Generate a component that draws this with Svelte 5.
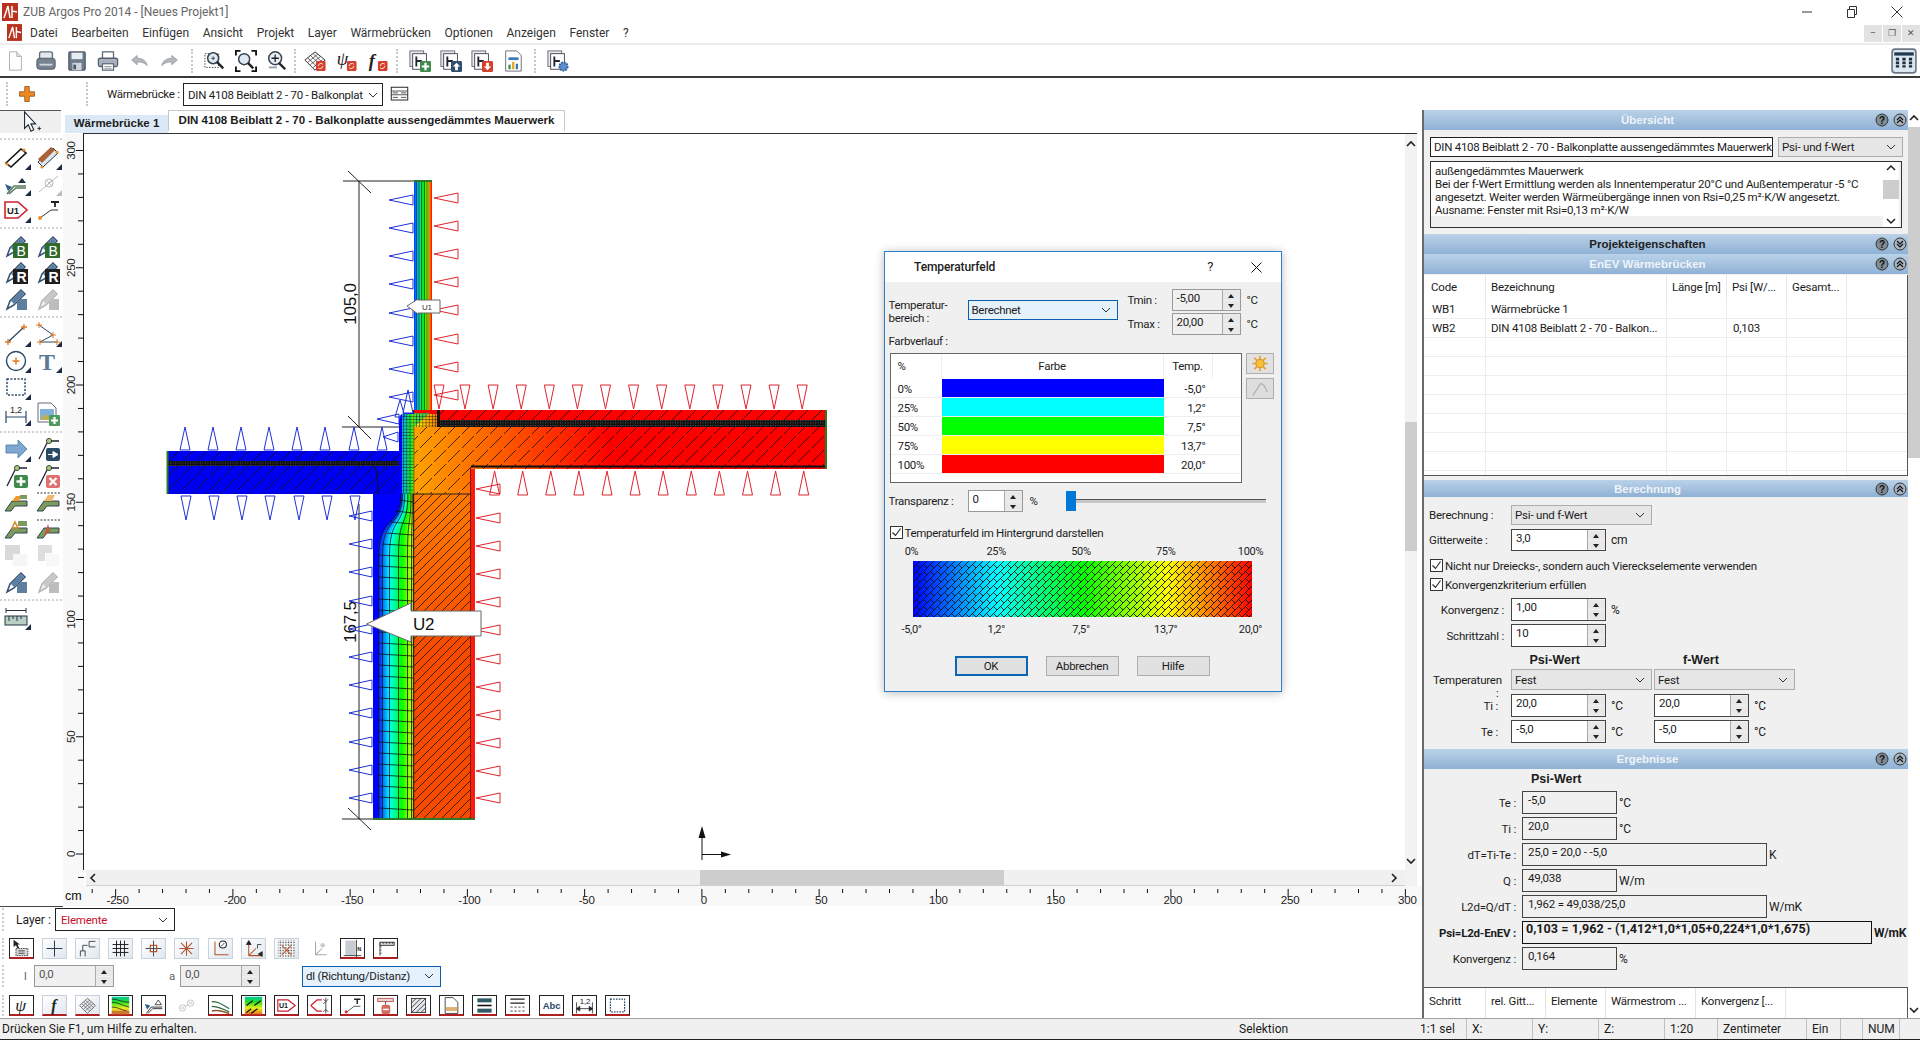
<script>
const badge = `<rect x="13" y="12" width="10.5" height="11" rx="1.5" fill="#d5402d"/><path d="M15.5 17.5a3 3 0 0 1 5-2M20.5 17.5a3 3 0 0 1-5 2" stroke="#fff" fill="none"/>`;
const stack = `<rect x="1" y="1" width="15" height="17" fill="#e8e8e8" stroke="#667"/><rect x="4" y="4" width="15" height="17" fill="#fff" stroke="#445"/><path d="M8 7v11M8 12h6" stroke="#223" stroke-width="2"/>`;
const pen = `<path d="M3 22l3-8L17 3l4 4L10 18z" fill="#fff" stroke="#33506e" stroke-width="1.5"/><path d="M7 14l10-10 3 3-10 10z" fill="#5b7fa3"/>`;
const penG = `<path d="M3 22l3-8L17 3l4 4L10 18z" fill="#eee" stroke="#b5b5b5" stroke-width="1.5"/><path d="M7 14l10-10 3 3-10 10z" fill="#c8c8c8"/>`;
const node = `<circle cx="13" cy="4" r="2.6" fill="#a9c48a" stroke="#3c5a2d"/><path d="M3 22L11 6M15 4h8" stroke="#223" stroke-width="1.3" fill="none"/>`;
const strip = `<path d="M1 21l7-10h15v5H11l-4 5z" fill="#7c9a5e" stroke="#345"/>`;
const I = {
  doc:`<path d="M6 2h8l5 5v15H6z" fill="#fff" stroke="#a5adb8"/><path d="M14 2v5h5" fill="#dfe4ea" stroke="#a5adb8"/>`,
  fax:`<rect x="5" y="2" width="14" height="9" rx="2" fill="#e5e9ee" stroke="#5d6b7b" stroke-width="1.5"/><rect x="2" y="9" width="20" height="12" rx="3" fill="#76828f" stroke="#4c5763"/><rect x="5" y="15" width="14" height="2" fill="#cfd5db"/>`,
  save:`<rect x="3" y="2" width="18" height="20" rx="1" fill="#6c7a8a" stroke="#3d4854"/><rect x="6" y="3" width="12" height="7" fill="#e8edf2"/><rect x="7" y="14" width="10" height="8" fill="#cfd6dd"/><rect x="8" y="16" width="3" height="5" fill="#4d5966"/>`,
  print:`<rect x="6" y="2" width="12" height="8" fill="#fff" stroke="#5d6b7b" stroke-width="1.4"/><rect x="1.5" y="9" width="21" height="9" rx="2" fill="#a9b2bc" stroke="#56616d" stroke-width="1.4"/><rect x="6" y="15" width="12" height="7" fill="#fff" stroke="#5d6b7b" stroke-width="1.4"/><path d="M8 18h8M8 20h8" stroke="#89939e"/>`,
  undo:`<path d="M4 11l6-5v3c6 0 10 3 11 8-3-3-6-4-11-4v3z" fill="#b4b8bc" stroke="#a0a4a8"/>`,
  redo:`<path d="M20 11l-6-5v3C8 9 4 12 3 17c3-3 6-4 11-4v3z" fill="#b4b8bc" stroke="#a0a4a8"/>`,
  zoomA:`<rect x="1" y="4" width="15" height="15" fill="none" stroke="#333" stroke-dasharray="1.5 1.5"/><circle cx="10" cy="9" r="6" fill="#dfe9f2" stroke="#34404c" stroke-width="1.6"/><path d="M14 13l7 7" stroke="#222" stroke-width="2.6"/><path d="M8 9h4M10 7v4" stroke="#34404c"/>`,
  zoomB:`<path d="M1 6V1h5M18 1h5v5M23 18v5h-5M6 23H1v-5" fill="none" stroke="#111" stroke-width="2"/><circle cx="10" cy="10" r="6" fill="#dfe9f2" stroke="#34404c" stroke-width="1.6"/><path d="M14 14l6 6" stroke="#222" stroke-width="2.6"/>`,
  zoomC:`<circle cx="10" cy="9" r="7" fill="#e8eef4" stroke="#34404c" stroke-width="1.6"/><path d="M6 9h8M10 5v8" stroke="#222" stroke-width="1.4"/><path d="M14 14l7 7" stroke="#222" stroke-width="2.6"/><path d="M3 19h9" stroke="#8ea2b5" stroke-width="2"/>`,
  gridR:`<path d="M1 11L12 2l11 9-11 11z" fill="#fff" stroke="#222"/><path d="M4 8.500l11 10.500M7 6l11 10M10 4l10 9.500M4 13.500L15 4.500M7 16l11-9M10 19l10-8" stroke="#333" stroke-width=".8"/>`+badge,
  psiR:`<text x="2" y="16" font-family="Liberation Serif" font-style="italic" font-size="20" fill="#222">ψ</text>`+badge,
  fR:`<text x="3" y="18" font-family="Liberation Serif" font-style="italic" font-weight="bold" font-size="20" fill="#222">f</text>`+badge,
  stackP:stack+`<rect x="12" y="12" width="12" height="12" rx="1.5" fill="#3f8a4d"/><path d="M18 14v8M14 18h8" stroke="#fff" stroke-width="2.4"/>`,
  stackU:stack+`<rect x="12" y="12" width="12" height="12" rx="1.5" fill="#2e4f6e"/><path d="M18 14l-4 4h2.500v4h3v-4H22z" fill="#fff"/>`,
  stackD:stack+`<rect x="12" y="12" width="12" height="12" rx="1.5" fill="#d5402d"/><path d="M18 22l-4-4h2.500v-4h3v4H22z" fill="#fff"/>`,
  stackG:stack+`<circle cx="18" cy="18" r="4.500" fill="#5b8fcf" stroke="#2d5f9c" stroke-width="2" stroke-dasharray="2 1"/>`,
  chart:`<path d="M4 1h12l5 5v17H4z" fill="#fff" stroke="#667"/><rect x="7" y="8" width="11" height="3" fill="#3b78b5"/><rect x="7" y="16" width="2.500" height="5" fill="#3d8a4a"/><rect x="11" y="13" width="2.500" height="8" fill="#e5a520"/><rect x="15" y="15" width="2.500" height="6" fill="#3b78b5"/>`,
  panel:`<rect x="1" y="1" width="22" height="22" rx="3" fill="#dbe7f3" stroke="#6d7680" stroke-width="1.5"/><rect x="3" y="4" width="18" height="3" fill="#243a50"/><path d="M6 9v9M12 9v9M18 9v9" stroke="#1f2d3a" stroke-width="3" stroke-dasharray="2.500 1"/>`,
  plus:`<path d="M9 2h6v7h7v6h-7v7H9v-7H2V9h7z" fill="#ee8a22" stroke="#8a4a12"/>`,
  list:`<rect x="1" y="3" width="22" height="17" fill="#fff" stroke="#222" stroke-width="1.3"/><path d="M1 8h22M1 13h22M3 16.500h7M14 16.500h7M3 10.500h7M14 10.500h7" stroke="#222"/>`,
  arrowTool:`<path d="M5 1v18l4-4 3 7 3-1.500-3-6.500h5z" fill="#fff" stroke="#1d2a38" stroke-width="1.2"/><path d="M19 19h4M21 17v4" stroke="#222"/>`,
  rectA:`<path d="M2 18L17 4l5 4L7 22z" fill="#fff" stroke="#111" stroke-width="1.6"/><circle cx="3" cy="19" r="1.600" fill="#e8902a"/><circle cx="20" cy="5" r="1.600" fill="#e8902a"/>`,
  rectB:`<path d="M2 17L17 3l5 5L7 22z" fill="#dfe8f0" stroke="#234" stroke-width="1"/><path d="M2 14L15 2l4 3L6 18z" fill="#a8623a"/><circle cx="6" cy="22" r="1.600" fill="#e8902a"/><circle cx="21" cy="7" r="1.600" fill="#e8902a"/>`,
  wallT:`<path d="M3 22l7-8h12M5 22l7-6h10" stroke="#5b7a5c" fill="none" stroke-width="1.500"/><path d="M14 11l4-5 4 5z" fill="#234"/><path d="M1 12l7 3-4 4z" fill="#2c5f94"/>`,
  circX:`<circle cx="13" cy="11" r="4" fill="none" stroke="#bbb"/><path d="M3 20L22 4M10 8l6 6M16 8l-6 6" stroke="#bbb"/>`,
  u1:`<path d="M1 4h13l9 8-9 8H1z" fill="#fff" stroke="#d02030" stroke-width="1.600"/><text x="3" y="15.500" font-size="9.500" font-weight="bold" font-family="Liberation Sans" fill="#222">U1</text>`,
  tLine:`<path d="M15 4h8M19 4v5" stroke="#222" stroke-width="1.800"/><path d="M4 20L15 12h7" stroke="#333" fill="none"/><circle cx="4" cy="20" r="2" fill="#e8902a"/>`,
  penB:pen+`<rect x="9" y="9" width="15" height="15" fill="#2f6b2a"/><text x="12.500" y="22" font-size="14" font-family="Liberation Sans" fill="#fff">B</text>`,
  penR:pen+`<rect x="9" y="9" width="15" height="15" fill="#1e1e1e"/><text x="12.500" y="22" font-size="14" font-weight="bold" font-family="Liberation Sans" fill="#fff">R</text>`,
  penS:pen+`<path d="M13 15l4-3h6v11H13z" fill="#5f7f9f"/>`,
  penD:penG+`<path d="M13 15l4-3h6v11H13z" fill="#bdbdbd"/>`,
  lineX:`<path d="M4 20L20 5" stroke="#2c4a68" stroke-width="1.300"/><path d="M1 20h6M4 17v6M17 5h6M20 2v6" stroke="#e07a22" stroke-width="1.300"/>`,
  poly:`<path d="M3 3l14 10-13 7h17" stroke="#2c4a68" fill="none"/><path d="M0 3h6M3 0v6M14 13h6M17 10v6M1 20h6M4 17v6M18 20h6M21 17v6" stroke="#e07a22"/>`,
  circ:`<circle cx="12" cy="12" r="9.500" fill="#fff" stroke="#2c4a68" stroke-width="1.400"/><path d="M8.500 12h7M12 8.500v7" stroke="#e07a22" stroke-width="1.400"/>`,
  bigT:`<text x="3" y="21" font-family="Liberation Serif" font-weight="bold" font-size="24" fill="#5b7a96">T</text>`,
  dash:`<rect x="3" y="4" width="18" height="16" fill="none" stroke="#2c4a68" stroke-width="1.500" stroke-dasharray="2 1.500"/>`,
  dim:`<path d="M2 9v12M22 9v12M2 15h20" stroke="#2c4a68" stroke-width="1.200"/><text x="6" y="11" font-size="9" font-family="Liberation Sans" fill="#222">1,2</text>`,
  pic:`<path d="M2 1h13l5 5v14H2z" fill="#fff" stroke="#667"/><rect x="4" y="7" width="14" height="11" fill="#7fb2d8"/><path d="M4 18l5-6 9 6z" fill="#c2b050"/><rect x="13" y="13" width="11" height="11" rx="1" fill="#4f9a5d"/><path d="M18.500 15v7M15 18.500h7" stroke="#fff" stroke-width="2.200"/>`,
  blueArr:`<path d="M2 8h12V3l9 9-9 9v-5H2z" fill="#7ea8cf" stroke="#4a78a5" stroke-width=".8"/>`,
  nodeArr:node+`<rect x="10" y="11" width="14" height="13" rx="2" fill="#2a4a68"/><path d="M12 17.500h5v-3l5 3-5 3v-3" fill="#fff" stroke="#fff"/>`,
  nodeP:node+`<rect x="10" y="11" width="14" height="13" rx="2" fill="#3f8a4d"/><path d="M17 13v9M12.500 17.500h9" stroke="#fff" stroke-width="2.500"/>`,
  nodeX:node+`<rect x="10" y="11" width="14" height="13" rx="2" fill="#e07070"/><path d="M13.500 14l7 7M20.500 14l-7 7" stroke="#fff" stroke-width="2.200"/>`,
  stripA:strip+`<path d="M8 11l4-5h6l-3 5z" fill="#ef9a2a"/><path d="M16 5h7v4h-7z" fill="#7c9a5e"/>`,
  stripB:strip+`<path d="M8 11l4-6h7l-3 6z" fill="#f2b66e"/><path d="M1 3h23" stroke="#333" stroke-dasharray="2 1.500"/>`,
  stripC:strip+`<path d="M8 11l3-6 3 6z" fill="none" stroke="#d88a30" stroke-width="1.600"/><path d="M14 4h9v5h-9z" fill="#7c9a5e"/>`,
  stripD:strip+`<path d="M8 19l4-12 2 7z" fill="#c8563a"/><path d="M1 3h23" stroke="#333" stroke-dasharray="2 1.500"/>`,
  sqA:`<rect x="1" y="2" width="15" height="15" fill="#d9d9d9"/><rect x="9" y="11" width="14" height="12" fill="#f6f6f6"/>`,
  sqB:`<path d="M2 2h14v8h-7v8H2z" fill="#dedede"/><path d="M10 11h13v12H10z" fill="#f8f8f8"/>`,
  ruler:`<path d="M2 3v5M22 3v5M2 5.500h20" stroke="#234"/><rect x="1" y="11" width="22" height="9" fill="#b9cfc4" stroke="#234"/><path d="M5 11v5M9 11v3M13 11v5M17 11v3" stroke="#234"/>`,
  selBox:`<path d="M2 1v9l3-2 2 4 2-1-2-4h3z" fill="#222"/><rect x="5" y="12" width="15" height="9" fill="#d9d9d9" stroke="#222" stroke-dasharray="2 1"/><path d="M8 15h8M8 18h8" stroke="#222"/>`,
  cross:`<path d="M2 12h20M12 2v20" stroke="#2c3e50" stroke-width="1.300"/>`,
  bracket:`<path d="M3 22v-7h6v7M6 15V8h6" stroke="#223" fill="none"/><path d="M14 3h8M14 3v7h8" stroke="#223" fill="none"/>`,
  gridS:`<path d="M2 7h20M2 12h20M2 17h20M7 2v20M12 2v20M17 2v20" stroke="#1a1a1a" stroke-width="1.200"/>`,
  snap:`<path d="M2 12h20M12 2v20" stroke="#222"/><rect x="8" y="8" width="8" height="8" fill="none" stroke="#b04a20" stroke-width="1.400"/>`,
  star:`<path d="M3 12h18M12 3v18M5 5l14 14M19 5L5 19" stroke="#b4522a" stroke-width="1.300"/>`,
  axisO:`<path d="M5 3v17h17" stroke="#b4522a" fill="none" stroke-width="1.300"/><circle cx="15" cy="7" r="4.500" fill="#fff" stroke="#222" stroke-width="1.300"/><path d="M13 9l4-4" stroke="#222"/>`,
  axisA:`<path d="M6 21V5M6 21h16M6 21l9-9" stroke="#b4522a" stroke-width="1.300"/><path d="M6 2l-3 5h6zM23 16v6l-5-3zM17 7h5M17 7v5" fill="#222" stroke="#222"/>`,
  dots:`<rect x="1" y="1" width="22" height="22" fill="#fff"/><rect x="1" y="1" width="22" height="22" fill="url(#dotp)"/><path d="M6 20L18 8M6 8l12 12" stroke="#c25a30" stroke-width="1.300"/>`,
  axisD:`<path d="M7 3v17h14M7 20l8-8" stroke="#a8a8a8" fill="none" stroke-width="1.300"/><circle cx="16" cy="8" r="3" fill="#ccc"/>`,
  nBar:`<rect x="3" y="2" width="13" height="19" fill="#c6ccd4"/><path d="M1 21h22M17 1v22" stroke="#222"/><text x="18" y="15" font-size="7" font-weight="bold" font-family="Liberation Sans" fill="#222">N</text>`,
  rul2:`<path d="M5 21V5h18M5 10h2M5 14h2M5 18h2" stroke="#222" fill="none"/><rect x="5" y="4" width="18" height="4" fill="#c9d6ce" stroke="#222"/><path d="M9 4v2M13 4v2M17 4v2M21 4v2" stroke="#222"/>`,
  psi:`<text x="4" y="19" font-family="Liberation Serif" font-style="italic" font-size="22" fill="#222">ψ</text>`,
  f:`<text x="8" y="19" font-family="Liberation Serif" font-style="italic" font-weight="bold" font-size="20" fill="#222">f</text>`,
  mesh:`<path d="M2 12L12 3l10 9-10 10z" fill="#e7edf2" stroke="#555"/><path d="M7 7.500l10 9M9.500 5.500l10 9M5 10l10 9M7 16.500l10-9M9.500 18.500l10-9M5 14l10-9" stroke="#555" stroke-width=".8"/>`,
  heat:`<rect x="1" y="1" width="22" height="22" fill="url(#heatg)"/><path d="M1 8c8 0 10 3 22 6M1 14c8 0 10 3 22 6M1 4c8 0 10 3 22 4" stroke="#222" fill="none"/><rect x="1" y="19" width="22" height="4" fill="#c73"/>`,
  wall2:`<path d="M3 22l6-8h14M5 22l6-6h12" stroke="#333" fill="none" stroke-width="1.200"/><path d="M14 11l4-6 4 6z" fill="#fff" stroke="#222"/><path d="M1 10l7 2-4 5z" fill="#2c5f94"/>`,
  linkD:`<circle cx="7" cy="15" r="4" fill="none" stroke="#bbb"/><circle cx="17" cy="9" r="4" fill="none" stroke="#bbb"/><path d="M15 7l4 4M19 7l-4 4M5 13l4 4M9 13l-4 4M10 13l4-2" stroke="#bbb"/>`,
  iso:`<path d="M1 7c8 0 12 3 22 9M1 13c8 0 12 3 22 7" stroke="#2a6a3a" fill="none" stroke-width="1.500"/><path d="M1 19c6-2 14 0 22 3" stroke="#8a5a30" stroke-width="2" fill="none"/>`,
  flow:`<rect x="1" y="1" width="22" height="22" fill="url(#heatg)"/><path d="M3 12l8-6M9 22l8-6M13 12l8-6M3 21l6-5" stroke="#111" stroke-width="1.600"/>`,
  u1b:`<path d="M1 5h13l9 7-9 7H1z" fill="#fff" stroke="#d02030" stroke-width="1.500"/><text x="2.500" y="15.500" font-size="9" font-weight="bold" font-family="Liberation Sans" fill="#222">U1</text>`,
  u1c:`<path d="M1 12l8-7h6M1 12l8 7h6" stroke="#d02030" fill="none" stroke-width="1.500"/><path d="M17 4l3 3-3 3M23 4l-3 3M17 20l3-3 3 3M20 2v20" stroke="#223" fill="none"/>`,
  tb:`<path d="M14 4h8M18 4v6" stroke="#222" stroke-width="1.800"/><path d="M4 21l10-8h8" stroke="#333" fill="none"/><circle cx="4" cy="20" r="2" fill="#d5402d"/>`,
  stopB:`<path d="M2 3h20v4H2z" fill="#d9d9d9" stroke="#c33"/><path d="M12 7v4" stroke="#333"/><rect x="7" y="11" width="11" height="12" rx="3" fill="#d56a5e"/><rect x="9" y="16" width="7" height="2" fill="#fff"/>`,
  hatch:`<rect x="3" y="3" width="18" height="18" fill="#e3e7ea" stroke="#222"/><path d="M3 9l6-6M3 15l12-12M3 21L21 3M9 21l12-12M15 21l6-6" stroke="#222"/>`,
  doc2:`<path d="M4 2h10l6 6v14H4z" fill="#fff" stroke="#222"/><rect x="5" y="14" width="14" height="5" fill="#e0b070"/>`,
  layers:`<rect x="3" y="3" width="18" height="5" fill="#2f5a66"/><rect x="3" y="16" width="18" height="5" fill="#2f5a66"/><path d="M3 12h18" stroke="#111" stroke-width="2"/>`,
  lines:`<path d="M3 4h18M3 9h18" stroke="#222" stroke-width="1.400"/><path d="M3 14h18M3 19h18" stroke="#222" stroke-dasharray="3 2"/>`,
  abc:`<text x="1" y="16" font-size="12" font-weight="bold" font-family="Liberation Sans" fill="#2c4a68">Abc</text>`,
  dim2:`<path d="M2 8v14M22 8v14M2 16h20M2 16l4-3v6zM22 16l-4-3v6z" stroke="#222" fill="#222"/><text x="6" y="10" font-size="10" font-family="Liberation Sans" fill="#222">1,2</text>`,
  sun:`<circle cx="12" cy="12" r="6" fill="#f0a010" stroke="#c07808"/><path d="M12 1v22M1 12h22M4 4l16 16M20 4L4 20" stroke="#e8a020" stroke-width="2.200"/><circle cx="12" cy="12" r="5" fill="#f7c040"/>`,
  tool:`<path d="M2 22L13 5c4 1 7 5 9 12M13 5l-3 4" stroke="#a8a8a8" fill="none" stroke-width="1.500"/>`,
};
const menus = ['Datei','Bearbeiten','Einfügen','Ansicht','Projekt','Layer','Wärmebrücken','Optionen','Anzeigen','Fenster','?'];
const tb1 = [['doc','fax','save','print','undo','redo'],['zoomA','zoomB','zoomC'],['gridR','psiR','fR'],['stackP','stackU','stackD','chart'],['stackG']];
const left = [
  [['rectA',1],['rectB',1],['wallT',1],['circX',2],['u1',1],['tLine',0]],
  [['penB',0],['penB',0],['penR',0],['penR',0],['penS',0],['penD',0]],
  [['lineX',1],['poly',1],['circ',1],['bigT',1],['dash',1],[null,0],['dim',1],['pic',0]],
  [['blueArr',1],['nodeArr',0],['nodeP',0],['nodeX',0],['stripA',0],['stripB',0],['stripC',0],['stripD',0],['sqA',0],['sqB',0],['penS',0],['penD',0]],
  [['ruler',1],[null,0]],
];
const row2 = [['selBox','on'],['cross',''],['bracket',''],['gridS',''],['snap',''],['star',''],['axisO',''],['axisA',''],['dots',''],['axisD','off'],['nBar','on'],['rul2','on']];
const row4 = [['psi','on'],['f','lt'],['mesh','lt'],['heat','on'],['wall2','on'],['linkD','off'],['iso','on'],['flow','on'],['u1b','on'],['u1c','on'],['tb','on'],['stopB','on'],['hatch','on'],['doc2','on'],['layers','on'],['lines','on'],['abc','on'],['dim2','on'],['dash','on']];
const colors = [['0%','#0000ff','-5,0°'],['25%','#00ffff','1,2°'],['50%','#00ff00','7,5°'],['75%','#ffff00','13,7°'],['100%','#ff0000','20,0°']];
const rows = [['WB1','Wärmebrücke 1','','',''],['WB2','DIN 4108 Beiblatt 2 - 70 - Balkon...','','0,103',''],...Array(8).fill(['','','','',''])];

const vticks = Array.from({length:33},(_,i)=>i-1).map(i=>({y:854-23.45*i,major:i%5===0,lab:i%5===0&&i>=0?String(i*10):''}));
const hticks = Array.from({length:57},(_,i)=>i-26).map(i=>({x:701.9+23.45*i,major:i%5===0,lab:i%5===0?String(i*10):''}));

const ramp = t => {
  const s=[[0,0,255],[0,255,255],[0,255,0],[255,255,0],[255,0,0]];
  const p=Math.min(3.999,t*4),k=Math.floor(p),f=p-k;
  const c=s[k].map((v,j)=>Math.round(v+(s[k+1][j]-v)*f));
  return `rgb(${c.join(',')})`;
};
const bands = Array.from({length:36},(_,k)=>{
  const xb=378+k, xt=401+k*12/35;
  return {d:`M${xt} 494C${xt} 528 ${xb} 515 ${xb} 556L${xb} 819L413 819L413 494Z`,c:ramp(0.02+k/35*0.72)};
});
const meshV = [0,4,11,20,29,33].map(k=>{
  const xb=378.5+k, xt=401+k*12/35;
  return `M${xt} 494C${xt} 528 ${xb} 515 ${xb} 556L${xb} 819`;
});
const meshH = Array.from({length:30},(_,i)=>{
  const y=500+i*11; const xl=y<556?401-(y-494)*0.37:379;
  return `M${xl} ${y}L413 ${y+2}`;
});
const tri = {
  l:(t,b,c,h)=>`${t},${c} ${b},${c-h} ${b},${c+h}`,
  u:(c,t,b,h)=>`${c},${t} ${c-h},${b} ${c+h},${b}`,
  d:(c,t,b,h)=>`${c},${b} ${c-h},${t} ${c+h},${t}`,
};
const blue = [
  ...[200,228,256,284,313,341,369,397].map(y=>tri.l(389,413,y,5)),
  tri.l(377,399,419,5), tri.l(383,398,437,5),
  ...[516,544,572,601,629,657,685,713,742,770,798].map(y=>tri.l(349,372,y,5)),
  ...[185,213,241,269,297,325,354,382].map(x=>tri.u(x,427,450,5)),
  tri.u(408,390,413,5), tri.u(400,400,417,5),
  ...[186,214,242,270,299,327,355].map(x=>tri.d(x,496,520,5)),
];
const red = [
  ...[198,226,254,282,310,339,367,395].map(y=>tri.l(434,458,y,5)),
  ...[489,518,546,574,602,630,659,687,715,743,771,798].map(y=>tri.l(476,500,y,5)),
  ...Array.from({length:14},(_,i)=>i===0?439:465+28.1*(i-1)).map(x=>tri.d(x,385,409,5)),
  ...Array.from({length:12},(_,i)=>494.6+28.1*i).map(x=>tri.u(x,471,495,5)),
];
</script>

{#snippet ic(name, w = 22, h = 22)}
  <svg class="ic" width={w} height={h} viewBox="0 0 24 24">{@html I[name]}</svg>
{/snippet}
{#snippet spin(val, cls = '')}
  <div class="spin {cls}"><span class="sv">{val}</span><span class="ud"><i class="up"></i><i class="dn"></i></span></div>
{/snippet}
{#snippet sel(val, cls = '')}
  <div class="sel {cls}"><span class="seltx">{val}</span><svg width="10" height="6" viewBox="0 0 10 6"><path d="M1 1l4 4 4-4" fill="none" stroke="#333"/></svg></div>
{/snippet}
{#snippet chk(t)}
  <div class="chk"><span class="box"><svg width="11" height="11" viewBox="0 0 11 11"><path d="M1.500 5.500l3 3 5-7" fill="none" stroke="#222" stroke-width="1.100"/></svg></span>{t}</div>
{/snippet}
{#snippet hd(t, dark = false, open = true, cls = '')}
  <div class="hd {cls}" class:dark>
    <span class="ht">{t}</span>
    <svg width="14" height="14" viewBox="0 0 14 14"><circle cx="7" cy="7" r="6" fill="#7f8b96" stroke="#333"/><text x="7" y="10.500" text-anchor="middle" font-size="10" font-weight="bold" font-family="Liberation Sans" fill="#111">?</text></svg>
    <svg width="14" height="14" viewBox="0 0 14 14"><circle cx="7" cy="7" r="6" fill="#a9b6c2" stroke="#333"/><path d={open ? 'M4 7l3-3 3 3M4 10l3-3 3 3' : 'M4 4l3 3 3-3M4 7l3 3 3-3'} fill="none" stroke="#111" stroke-width="1.200"/></svg>
  </div>
{/snippet}

<div class="app">
  <svg class="defs" width="0" height="0">
    <defs>
      <pattern id="dotp" width="2" height="2" patternUnits="userSpaceOnUse"><rect width="1" height="1" fill="#444"/></pattern>
      <linearGradient id="heatg" x1="0" y1="0" x2="0" y2="1"><stop offset="0" stop-color="#00c8a0"/><stop offset=".3" stop-color="#20e020"/><stop offset=".65" stop-color="#e8f020"/><stop offset="1" stop-color="#e87020"/></linearGradient>
    </defs>
  </svg>

  <div class="title">
    <svg class="logo" width="16" height="18" viewBox="0 0 16 18"><rect width="16" height="18" fill="#b8321e"/><path d="M2 15L6 3M6 3l2 12M10 3v12M10 8l5 1" stroke="#fff" stroke-width="1.500" fill="none"/></svg>
    <span class="tt">ZUB Argos Pro 2014 - [Neues Projekt1]</span>
    <div class="wc">
      <svg width="12" height="12" viewBox="0 0 12 12"><path d="M1 6h10" stroke="#333"/></svg>
      <svg width="12" height="12" viewBox="0 0 12 12"><path d="M1.500 3.500h7v8h-7zM3.500 3.500v-3h7v8h-2" fill="none" stroke="#333"/></svg>
      <svg width="12" height="12" viewBox="0 0 12 12"><path d="M.5.500l11 11M11.500.500l-11 11" stroke="#333"/></svg>
    </div>
  </div>

  <div class="menu">
    <svg class="mlogo" width="15" height="17" viewBox="0 0 16 18"><rect width="16" height="18" fill="#b8321e"/><path d="M2 15L6 3M6 3l2 12M10 3v12M10 8l5 1" stroke="#fff" stroke-width="1.500" fill="none"/></svg>
    {#each menus as m}<span class="mi">{m}</span>{/each}
    <div class="mdi"><span>–</span><span>❐</span><span>✕</span></div>
  </div>

  <div class="tb1">
    {#each tb1 as g, i}
      {#if i}<span class="grip" class:gs={i === 2} class:gm={i === 3}></span>{/if}
      {#each g as n}<span class="slot">{@render ic(n)}</span>{/each}
    {/each}
    <span class="panelbtn">{@render ic('panel', 28, 26)}</span>
  </div>

  <div class="tb2">
    <span class="grip g2"></span>
    <span class="plus">{@render ic('plus', 18, 18)}</span>
    <span class="grip g3"></span>
    <span class="wlab">Wärmebrücke :</span>
    {@render sel('DIN 4108 Beiblatt 2 - 70 - Balkonplat', 'wsel')}
    <span class="listb">{@render ic('list', 21, 18)}</span>
  </div>

  <div class="main">
    <div class="work">
      <div class="upper">
        <div class="ltb">
          <div class="tool">{@render ic('arrowTool', 22, 22)}</div>
          {#each left as grp}
            <span class="lgrip"></span>
            <div class="lgrp">
              {#each grp as [n, t]}
                <span class="lslot" class:tri={t === 1} class:trid={t === 2}>{#if n}{@render ic(n, 24, 24)}{/if}</span>
              {/each}
            </div>
          {/each}
        </div>

        <div class="center">
          <div class="tabs">
            <span class="tab1">Wärmebrücke 1</span>
            <span class="tab2">DIN 4108 Beiblatt 2 - 70 - Balkonplatte aussengedämmtes Mauerwerk</span>
          </div>
          <div class="area">
            <svg class="vr" width="21" height="752" viewBox="63 134 21 752">
              {#each vticks as t}
                <line x1={t.major ? 76 : 78} x2="84" y1={t.y} y2={t.y} stroke="#111"/>
                {#if t.lab}<text transform="translate(75 {t.y}) rotate(-90)" text-anchor="middle" font-size="11.500" font-family="Liberation Sans" fill="#222">{t.lab}</text>{/if}
              {/each}
            </svg>
            <svg class="cv" width="1321" height="736" viewBox="84 134 1321 736">
              <defs>
                <linearGradient id="slabR" gradientUnits="userSpaceOnUse" x1="414" y1="0" x2="610" y2="0"><stop offset="0" stop-color="#ffa200"/><stop offset=".45" stop-color="#ff5a00"/><stop offset="1" stop-color="#ff0000"/></linearGradient>
                <linearGradient id="colR" gradientUnits="userSpaceOnUse" x1="414" y1="494" x2="470" y2="640"><stop offset="0" stop-color="#ff8000"/><stop offset="1" stop-color="#f64a00"/></linearGradient>
                <linearGradient id="wallU" gradientUnits="userSpaceOnUse" x1="414" y1="0" x2="432" y2="0">
                  <stop offset="0" stop-color="#0030ff"/><stop offset=".15" stop-color="#00a0ff"/><stop offset=".3" stop-color="#00e0a0"/><stop offset=".55" stop-color="#00f000"/><stop offset=".75" stop-color="#a0f000"/><stop offset=".85" stop-color="#ffe000"/><stop offset=".93" stop-color="#ff4000"/><stop offset="1" stop-color="#ff0000"/>
                </linearGradient>
                <linearGradient id="meshG" gradientUnits="userSpaceOnUse" x1="402" y1="0" x2="440" y2="0"><stop offset="0" stop-color="#00b0ff"/><stop offset=".25" stop-color="#20f020"/><stop offset=".35" stop-color="#ffff00"/><stop offset=".6" stop-color="#ffc000"/><stop offset="1" stop-color="#ff7000"/></linearGradient>
                <pattern id="hC" width="9" height="9" patternUnits="userSpaceOnUse"><path d="M-1 10L10 -1" stroke="#111" stroke-width=".8"/></pattern>
                <pattern id="hS" width="28" height="28" patternUnits="userSpaceOnUse"><path d="M0 14L12 2M14 28L26 16M-14 42L-2 30M14 14L26 2M0 28L12 16" stroke="#111" stroke-width=".8"/></pattern>
                <pattern id="fine" width="3.200" height="3.200" patternUnits="userSpaceOnUse"><path d="M0 0h3.200M0 0v3.200" stroke="#111" stroke-width=".9"/></pattern>
                <pattern id="dk" width="2.500" height="2.500" patternUnits="userSpaceOnUse"><rect width="2.500" height="2.500" fill="#111"/><rect width="1" height="1" fill="#555"/></pattern>
                <clipPath id="lowClip"><rect x="373" y="494" width="40" height="325"/></clipPath>
              </defs>

              <path d="M343 181H414M359 181V427M342 427H402M359 504V819M342 819H373M348 171L371 193M348 416L371 439M348 808L371 830" stroke="#222" fill="none"/>
              <text transform="translate(356 304) rotate(-90)" text-anchor="middle" font-size="17" font-family="Liberation Sans" fill="#111">105,0</text>
              <text transform="translate(356 622) rotate(-90)" text-anchor="middle" font-size="17" font-family="Liberation Sans" fill="#111">167,5</text>

              <rect x="414" y="181" width="18" height="232" fill="url(#wallU)"/>
              <path d="M416.500 181V413M419 181V413M421.500 181V413M424.500 181V413M427 181V413M429 181V413" stroke="#111" stroke-width=".7" opacity=".8"/>
              <path d="M414 181H432" stroke="#2a7a2a" stroke-width="2"/>

              <rect x="167" y="451" width="235" height="43" fill="#0000f0"/>
              <rect x="167" y="451" width="235" height="43" fill="url(#hS)"/>
              <rect x="167" y="461" width="235" height="5" fill="url(#dk)"/>
              <path d="M167.500 451V494" stroke="#2a7a2a" stroke-width="2"/>
              <path d="M375 466c3 9 3 18 3 28" stroke="#111" fill="none"/>

              <rect x="414" y="410" width="412" height="59" fill="#ff0000"/>
              <rect x="414" y="427" width="412" height="42" fill="url(#slabR)"/>
              <rect x="440" y="410" width="386" height="10" fill="url(#hS)"/>
              <rect x="414" y="427" width="412" height="42" fill="url(#hS)"/>
              <rect x="440" y="420" width="386" height="7" fill="url(#dk)"/>
              <path d="M471 466.500H826" stroke="#111" stroke-width="2"/>
              <path d="M826 410V469" stroke="#2a7a2a" stroke-width="2"/>

              <rect x="414" y="427" width="57" height="67" fill="url(#slabR)"/>
              <rect x="414" y="427" width="57" height="67" fill="url(#hS)"/>
              <rect x="414" y="494" width="57" height="325" fill="url(#colR)"/>
              <rect x="414" y="494" width="57" height="325" fill="url(#hC)"/>
              <rect x="470" y="469" width="5" height="350" fill="#ff1a10"/>
              <path d="M470.500 468V819" stroke="#7a2000"/>
              <path d="M402 494H471" stroke="#222"/>

              <rect x="373" y="494" width="41" height="325" fill="#0000ff"/>
              <g clip-path="url(#lowClip)">
                {#each bands as b}<path d={b.d} fill={b.c}/>{/each}
                {#each meshV as d}<path {d} fill="none" stroke="#111" stroke-width=".8"/>{/each}
                {#each meshH as d}<path {d} stroke="#111" stroke-width=".8"/>{/each}
              </g>
              <path d="M413.500 410V819" stroke="#222" stroke-width="1.400"/>
              <path d="M373 819H475" stroke="#2a7a2a" stroke-width="2"/>

              <path d="M399 494V420q0-7 7-7h8v81z" fill="#0000ff"/>
              <path d="M402 494V420h12v74z" fill="url(#meshG)"/>
              <rect x="402" y="414" width="38" height="13" fill="url(#meshG)"/>
              <path d="M414 427l16-14h-16z" fill="#00d060" opacity=".7"/>
              <rect x="402" y="414" width="38" height="13" fill="url(#fine)"/>
              <path d="M402 427h12v67h-12z" fill="url(#fine)"/>
              <rect x="437" y="410" width="3" height="17" fill="#111"/>

              {#each blue as p}<polygon points={p} fill="none" stroke="#1f30d8"/>{/each}
              {#each red as p}<polygon points={p} fill="none" stroke="#e0232c"/>{/each}

              <path d="M407 306L418 299V300H440V313H418V314Z" fill="#fff" stroke="#666"/>
              <text x="422" y="309.500" font-size="8" font-family="Liberation Sans" fill="#333">U1</text>
              <path d="M366.500 624L411 603V611H481V636H411V642Z" fill="#fff" stroke="#666"/>
              <text x="413" y="630" font-size="17" font-family="Liberation Sans" fill="#111">U2</text>

              <path d="M702 860V834M702 854.500H726" stroke="#111"/>
              <path d="M702 826l-3.500 12h7zM731 854.500l-10-3v6z" fill="#111"/>
            </svg>
            <div class="vs">
              <svg class="arr" width="12" height="16" viewBox="0 0 12 16"><path d="M2 10l4-4 4 4" fill="none" stroke="#222" stroke-width="1.600"/></svg>
              <div class="vthumb"></div>
              <svg class="arr arrb" width="12" height="16" viewBox="0 0 12 16"><path d="M2 6l4 4 4-4" fill="none" stroke="#222" stroke-width="1.600"/></svg>
            </div>
            <div class="hs">
              <svg width="14" height="16" viewBox="0 0 14 16"><path d="M9 4L5 8l4 4" fill="none" stroke="#222" stroke-width="1.600"/></svg>
              <div class="hthumb"></div>
              <svg class="arrr" width="14" height="16" viewBox="0 0 14 16"><path d="M5 4l4 4-4 4" fill="none" stroke="#222" stroke-width="1.600"/></svg>
            </div>
            <div class="cm">cm</div>
            <svg class="hr" width="1338" height="20" viewBox="84 886 1338 20">
              {#each hticks as t}
                <line x1={t.x} x2={t.x} y1="889" y2={t.major ? 897 : 893} stroke="#111"/>
                {#if t.lab}<text x={t.x + 2} y="904" text-anchor="middle" font-size="11.500" font-family="Liberation Sans" fill="#222">{t.lab}</text>{/if}
              {/each}
            </svg>
          </div>
        </div>
      </div>

      <div class="lower">
        <div class="cap"></div>
        <div class="lrow lay"><span class="ll">Layer :</span>{@render sel('Elemente', 'layer')}</div>
        <div class="lrow btns">
          {#each row2 as [n, s]}<span class="bt {s}">{@render ic(n, 23, 19)}</span>{/each}
        </div>
        <div class="lrow coord">
          <span class="cl1">l</span>{@render spin('0,0', 'gray')}
          <span class="cl2">a</span>{@render spin('0,0', 'gray')}
          {@render sel('dl (Richtung/Distanz)', 'blue dl')}
        </div>
        <div class="lrow btns b4">
          {#each row4 as [n, s]}<span class="bt {s}">{@render ic(n, 23, 19)}</span>{/each}
        </div>
      </div>
    </div>

    <div class="right">
      <div class="pb">
        {@render hd('Übersicht')}
        <div class="ov">
          <div class="ov1"><div class="inp">DIN 4108 Beiblatt 2 - 70 - Balkonplatte aussengedämmtes Mauerwerk</div>{@render sel('Psi- und f-Wert', 'ovs')}</div>
          <div class="ta">
            <div class="tx">außengedämmtes Mauerwerk<br>Bei der f-Wert Ermittlung werden als Innentemperatur 20°C und Außentemperatur -5 °C<br>angesetzt. Weiter werden Wärmeübergänge innen von Rsi=0,25 m²·K/W angesetzt.<br>Ausname: Fenster mit Rsi=0,13 m²·K/W</div>
            <div class="tas">
              <svg width="16" height="13" viewBox="0 0 16 13"><path d="M4 8l4-4 4 4" fill="none" stroke="#222" stroke-width="1.500"/></svg>
              <div class="tath"></div>
              <svg class="tadn" width="16" height="13" viewBox="0 0 16 13"><path d="M4 5l4 4 4-4" fill="none" stroke="#222" stroke-width="1.500"/></svg>
            </div>
          </div>
        </div>
        {@render hd('Projekteigenschaften', true, false)}
        {@render hd('EnEV Wärmebrücken')}
        <div class="wt">
          <div class="wh"><span>Code</span><span>Bezeichnung</span><span>Länge [m]</span><span>Psi [W/...</span><span>Gesamt...</span><span></span></div>
          {#each rows as r}
            <div class="wr">{#each r as c}<span>{c}</span>{/each}<span></span></div>
          {/each}
        </div>
        {@render hd('Berechnung', false, true, 'short')}
        <div class="calc">
          <div class="r r1"><span class="l">Berechnung :</span>{@render sel('Psi- und f-Wert', 'fs')}</div>
          <div class="r r2"><span class="l">Gitterweite :</span>{@render spin('3,0')}<span class="u">cm</span></div>
          <div class="c1">{@render chk('Nicht nur Dreiecks-, sondern auch Viereckselemente verwenden')}</div>
          <div class="c2">{@render chk('Konvergenzkriterium erfüllen')}</div>
          <div class="r r3"><span class="l ra">Konvergenz :</span>{@render spin('1,00')}<span class="u">%</span></div>
          <div class="r r4"><span class="l ra">Schrittzahl :</span>{@render spin('10')}</div>
          <div class="r ttl"><b class="t1">Psi-Wert</b><b class="t2">f-Wert</b></div>
          <div class="r r6"><span class="l tp">Temperaturen<em>:</em></span>{@render sel('Fest', 'fs')}{@render sel('Fest', 'fs sb')}</div>
          <div class="r r7"><span class="l rb">Ti :</span>{@render spin('20,0')}<span class="u uw">°C</span>{@render spin('20,0')}<span class="u">°C</span></div>
          <div class="r r4"><span class="l rb">Te :</span>{@render spin('-5,0')}<span class="u uw">°C</span>{@render spin('-5,0')}<span class="u">°C</span></div>
        </div>
        {@render hd('Ergebnisse')}
        <div class="res">
          <b class="rt">Psi-Wert</b>
          <div class="rr"><span class="rl">Te :</span><span class="rb1">-5,0</span><span class="ru">°C</span></div>
          <div class="rr"><span class="rl">Ti :</span><span class="rb1">20,0</span><span class="ru">°C</span></div>
          <div class="rr"><span class="rl">dT=Ti-Te :</span><span class="rb1 wide">25,0 = 20,0 - -5,0</span><span class="ru">K</span></div>
          <div class="rr"><span class="rl">Q :</span><span class="rb1">49,038</span><span class="ru">W/m</span></div>
          <div class="rr"><span class="rl">L2d=Q/dT :</span><span class="rb1 wide">1,962 = 49,038/25,0</span><span class="ru">W/mK</span></div>
          <div class="rr bold"><span class="rl">Psi=L2d-EnEV :</span><span class="rb1 xw">0,103 = 1,962 - (1,412*1,0*1,05+0,224*1,0*1,675)</span><span class="ru">W/mK</span></div>
          <div class="rr"><span class="rl">Konvergenz :</span><span class="rb1">0,164</span><span class="ru">%</span></div>
        </div>
        <div class="bt-t"><span>Schritt</span><span>rel. Gitt...</span><span>Elemente</span><span>Wärmestrom ...</span><span>Konvergenz [...</span></div>
      </div>
      <div class="ps">
        <svg width="12" height="16" viewBox="0 0 12 16"><path d="M2 10l4-4 4 4" fill="none" stroke="#222" stroke-width="1.600"/></svg>
        <div class="pthumb"></div>
        <svg class="psd" width="12" height="16" viewBox="0 0 12 16"><path d="M2 6l4 4 4-4" fill="none" stroke="#222" stroke-width="1.600"/></svg>
      </div>
    </div>
  </div>

  <div class="status">
    <span class="st0">Drücken Sie F1, um Hilfe zu erhalten.</span>
    <span class="st1">Selektion</span>
    <span class="st2">1:1 sel</span>
    <span class="st3">X:</span><span class="st3">Y:</span><span class="st3">Z:</span>
    <span class="st4">1:20</span><span class="st5">Zentimeter</span><span class="st6">Ein</span><span class="st7"></span><span class="st8">NUM</span>
  </div>

  <div class="dlg">
    <div class="dt">
      <span class="dtt">Temperaturfeld</span>
      <span class="dq">?</span>
      <svg width="11" height="11" viewBox="0 0 11 11"><path d="M.5.500l10 10M10.500.500l-10 10" stroke="#111"/></svg>
    </div>
    <div class="db">
      <div class="dtop">
        <div class="tlab">Temperatur-<br>bereich :</div>
        {@render sel('Berechnet', 'blue rng')}
        <div class="tm">
          <div class="tmr"><span class="tml">Tmin :</span>{@render spin('-5,00', 'gray')}<span class="tmu">°C</span></div>
          <div class="tmr"><span class="tml">Tmax :</span>{@render spin('20,00', 'gray')}<span class="tmu">°C</span></div>
        </div>
      </div>
      <div class="fv">Farbverlauf :</div>
      <div class="ftb">
        <div class="ft">
          <div class="fh"><span class="fp">%</span><span class="fc">Farbe</span><span class="fm">Temp.</span><span></span></div>
          {#each colors as [p, c, t]}
            <div class="fr"><span class="fp">{p}</span><span class="sw" style:background={c}></span><span class="fn">{t}</span><span></span></div>
          {/each}
        </div>
        <div class="fbs">
          <span class="fb">{@render ic('sun', 20, 17)}</span>
          <span class="fb dis">{@render ic('tool', 20, 17)}</span>
        </div>
      </div>
      <div class="trn">
        <span class="tlb">Transparenz :</span>
        {@render spin('0', 'white')}
        <span class="pc">%</span>
        <div class="sld"><i class="sth"></i><i class="str"></i></div>
      </div>
      <div class="dc">{@render chk('Temperaturfeld im Hintergrund darstellen')}</div>
      <div class="sc"><span>0%</span><span>25%</span><span>50%</span><span>75%</span><span>100%</span></div>
      <svg class="grad" width="339" height="56" viewBox="0 0 339 56">
        <defs>
          <linearGradient id="rb"><stop offset="0" stop-color="#0000ff"/><stop offset=".25" stop-color="#00ffff"/><stop offset=".5" stop-color="#00ff00"/><stop offset=".75" stop-color="#ffff00"/><stop offset="1" stop-color="#ff0000"/></linearGradient>
          <pattern id="brk" width="14" height="14" patternUnits="userSpaceOnUse">
            <path d="M-1 15L15 -1M-1 8L8 -1M6 15L15 6M10.500 3.500L14 7M3.500 10.500L7 14M3.500 3.500L7 7M10.500 10.500L14 14" stroke="#111" stroke-width=".9" fill="none"/>
          </pattern>
        </defs>
        <rect width="339" height="56" fill="url(#rb)"/>
        <rect width="339" height="56" fill="url(#brk)"/>
      </svg>
      <div class="sc sc2"><span>-5,0°</span><span>1,2°</span><span>7,5°</span><span>13,7°</span><span>20,0°</span></div>
      <div class="dbtn"><span class="btn def">OK</span><span class="btn">Abbrechen</span><span class="btn">Hilfe</span></div>
    </div>
  </div>
</div>

<style>
:global(body){margin:0;background:#fff}
.app{position:relative;width:1920px;height:1040px;overflow:hidden;background:#fff;display:flex;flex-direction:column;font:11.5px/14px Roboto,"Liberation Sans",sans-serif;color:#1c1c1c;letter-spacing:-.2px}
.defs{position:absolute}
.ic{display:block;overflow:visible}
.title{height:24px;display:flex;align-items:center;padding-left:2px;color:#666;font-size:12px;letter-spacing:0}
.tt{margin-left:5px}
.wc{margin-left:auto;display:flex;gap:33px;padding-right:17px}
.menu{height:17px;display:flex;align-items:center;font-size:12px;position:relative;color:#333;letter-spacing:0;padding-top:1px;box-sizing:border-box}
.mlogo{margin-left:7px;margin-right:8px}
.mi{margin-right:13.600px}
.mdi{position:absolute;right:0;top:1px;display:flex;gap:1px}
.mdi span{width:18px;height:17px;background:#e2e2e2;font-size:9px;line-height:17px;text-align:center;color:#555}
.tb1{margin-top:2px;margin-left:-1px;border-top:2px solid #ececec;border-bottom:2px solid #3a3a3a;display:flex;align-items:center;box-sizing:content-box;height:32px}
.slot{width:31px;display:flex;justify-content:center}
.grip{width:14px;height:24px;position:relative}
.grip::before{content:"";position:absolute;left:6px;top:0;bottom:0;border-left:2px dotted #c8c8c8}
.gs{width:7px}
.gs::before{left:2px}
.gm{width:12px}
.gm::before{left:4px}
.panelbtn{margin-left:auto;margin-right:2px}
.tb2{height:32px;display:flex;align-items:center}
.g2{width:8px}
.plus{width:34px;display:flex;justify-content:center;margin-left:2px}
.g3{width:14px;margin-left:40px}
.g3::before{left:2px}
.wlab{margin-left:9px;width:76px;white-space:nowrap;letter-spacing:-.3px}
.sel{display:flex;align-items:center;justify-content:space-between;gap:3px;box-sizing:border-box;padding:0 6px 0 3px;height:21px;border:1px solid #adadad;background:#e6e6e6;flex:none}
.sel svg{flex:none}
.seltx{white-space:nowrap;min-width:0}
.wsel{width:200px;height:23px;border:1px solid #222;background:#fff;margin-top:1px;padding-left:4px;padding-right:4px;letter-spacing:-.24px}
.listb{margin-left:6px}
.main{display:flex;height:908px}
.work{width:1422px;display:flex;flex-direction:column}
.upper{display:flex;height:796px}
.ltb{width:63px;display:flex;flex-direction:column;flex:none}
.tool{height:22px;width:61px;border-top:1px solid #555;background:#f0f0f0;display:flex;justify-content:center}
.lgrip{height:9px;display:block;background:repeating-linear-gradient(90deg,#d4d4d4 0 2px,transparent 2px 4px) center/100% 2px no-repeat;flex:none}
.ltb .lgrip:first-of-type{height:11px}
.lgrp{display:grid;grid-template-columns:32px 31px;grid-auto-rows:26.5px}
.lslot{position:relative;display:flex;justify-content:center;align-items:center}
.tri::after,.trid::after{content:"";position:absolute;right:1px;bottom:1px;border-style:solid;border-width:0 0 6px 6px;border-color:transparent transparent #1c2a44 transparent}
.trid::after{border-color:transparent transparent #bbb transparent}
.center{width:1359px;flex:none}
.tabs{height:24px;display:flex;align-items:flex-start}
.tab1{margin-top:5px;height:18px;width:103px;margin-left:2px;background:#dbe8f5;font:bold 11.5px/16px "Liberation Sans";letter-spacing:0;text-align:center;flex:none}
.tab2{height:21px;width:397px;box-sizing:border-box;border:1px solid #c8c8c8;border-bottom:0;font:bold 11.5px/19px "Liberation Sans";letter-spacing:0;text-align:center;flex:none}
.area{display:grid;grid-template-columns:21px 1321px 12px 5px;grid-template-rows:736px 16px 20px}
.vr{grid-row:1/3;grid-column:1;background:#f8f8f8;display:block}
.cv{grid-row:1;grid-column:2;display:block;border-top:1px solid #333;margin-top:-1px;box-sizing:content-box;border-left:1.500px solid #222;margin-left:-1.500px}
.vs{grid-row:1/3;grid-column:3;background:#f2f2f2;display:flex;flex-direction:column;border-top:1px solid #333;margin-top:-1px}
.arr{display:block;margin-top:2px}
.arrb{margin-top:auto;margin-bottom:17px}
.vthumb{width:12px;height:129px;background:#cdcdcd;margin-top:270px}
.hs{grid-row:2;grid-column:2;background:#f0f0f0;display:flex;margin-left:2px;border-bottom:1px solid #d0d0d0;box-sizing:border-box}
.hthumb{width:304px;height:15px;background:#cdcdcd;margin-left:600px}
.arrr{margin-left:auto;margin-right:4px}
.cm{grid-row:3;grid-column:1;background:#f8f8f8;font:12.500px/20px "Liberation Sans";padding-left:2px;color:#111;letter-spacing:0}
.hr{grid-row:3;grid-column:2/5;background:#f8f8f8;display:block}
.lower{height:112px;display:flex;flex-direction:column}
.cap{height:1px;width:63px;background:#444}
.lrow{display:flex;align-items:center;border-left:2px dotted #ccc;margin-left:2px}
.lay{margin-top:1px;height:23px}
.ll{margin-left:12px;width:39px;font-size:12px;letter-spacing:0}
.layer{width:120px;height:23px;border:1px solid #222;background:#fff;color:#c8102e;padding-left:5px}
.btns{margin-top:7px;height:21px;gap:8.100px;padding-left:5px}
.b4{margin-top:8px}
.bt{width:25px;height:21px;box-sizing:border-box;display:flex;justify-content:center;align-items:center;border:1px solid #c8d2da;background:linear-gradient(135deg,#fff,#dfe8ef)}
.bt.on{border:1px solid #222;border-bottom:2px solid #b02020;background:#fff}
.bt.lt{border:1px solid #ccd;border-bottom:2px solid #b02020}
.bt.off{border:0;background:none}
.coord{margin-top:6px;height:22px}
.cl1{margin-left:20px;width:10px;color:#666}
.cl2{margin-left:55px;width:11px;color:#666}
.spin{display:flex;box-sizing:border-box;width:95px;height:23px;border:1px solid #444;background:#fff;flex:none}
.spin.gray{width:80px;height:22px;background:#f0f0f0;border:1px solid #999;color:#555}
.sv{flex:1;padding:1px 0 0 4px}
.ud{width:17px;display:flex;flex-direction:column;gap:1px;background:#f0f0f0;border-left:1px solid #aaa;padding:1px 0}
.ud i{flex:1;position:relative;background:#e8e8e8;display:block}
.ud i::after{content:"";position:absolute;left:5px;border-left:3.500px solid transparent;border-right:3.500px solid transparent}
.up::after{top:3px;border-bottom:4px solid #222}
.dn::after{top:3px;border-top:4px solid #222}
.dl{margin-left:42px;width:139px;height:21px;padding-left:3px}
.blue{background:#e5f1fb;border:1px solid #0c5fb0}
.right{width:498px;display:flex;height:908px}
.pb{width:486px;border-left:2px solid #6a6a6a;box-sizing:border-box;background:#f0f0f0;display:flex;flex-direction:column}
.ps{width:12px;background:#fff;display:flex;flex-direction:column}
.pthumb{height:331px;background:#cdcdcd;margin-top:1px}
.psd{margin-top:auto}
.hd{height:20px;flex:none;display:flex;align-items:center;gap:4px;padding-right:1px;background:linear-gradient(#bad2e9,#8fb1d4);color:#eef3f8;font:bold 11.5px "Liberation Sans";letter-spacing:0}
.hd.short{height:17px}
.hd.dark{color:#222}
.ht{flex:1;text-align:center}
.ov{height:104px;box-sizing:border-box;padding:7px 6px 0 6px;background:#f0f0f0}
.ov1{display:flex;gap:5px;height:20px}
.inp{width:343px;box-sizing:border-box;border:1px solid #222;background:#fff;padding:2px 3px;white-space:nowrap;line-height:15px;flex:none;letter-spacing:-.26px}
.ovs{width:125px;height:20px;padding-left:3px}
.ta{margin-top:4px;height:67px;width:472px;box-sizing:border-box;border:1px solid #333;background:#f0f0f0;display:flex}
.tx{width:452px;height:54px;background:#fff;padding:3px 0 0 4px;box-sizing:border-box;line-height:13px;white-space:nowrap}
.tas{width:16px;margin-left:auto;margin-right:2px;display:flex;flex-direction:column;background:#fff}
.tath{height:19px;background:#cdcdcd;margin-top:5px}
.tadn{margin-top:auto}
.wt{height:201px;margin-top:1px;margin-bottom:4px;flex:none;box-sizing:border-box;background:#fff;border-right:1.500px solid #555;border-bottom:1.500px solid #555;overflow:hidden}
.wh,.wr{display:grid;grid-template-columns:62px 181px 60px 60px 60px 1fr}
.wh{height:25px;line-height:24px}
.wh span{padding-left:5px;border-right:1px solid #e8e8e8}
.wh span:first-child{padding-left:7px}
.wh span:last-child,.wr span:last-child{border:0}
.wr{height:19px;line-height:18px;border-bottom:1px solid #ececec;box-sizing:border-box}
.wr span{padding-left:6px;border-right:1px solid #ececec;white-space:nowrap}
.wr span:first-child{padding-left:8px}
.wr span:nth-child(2){padding-left:5px}
.calc{height:252px;flex:none;display:flex;flex-direction:column}
.r{display:flex;align-items:center}
.l{width:87px;flex:none;padding-left:5px;box-sizing:border-box}
.ra{text-align:right;padding-right:7px}
.rb{text-align:right;padding-right:13px}
.u{margin-left:5px;font-size:12px}
.uw{width:43px;flex:none}
.fs{width:141px;height:21px;padding-left:3px}
.sb{margin-left:2px}
.r1{margin-top:8px;height:20px}
.r1 .fs{height:20px}
.r2{margin-top:4px;height:22px}
.r2 .spin{height:22px}
.c1{margin-top:8px;padding-left:6px}
.c2{margin-top:6px;padding-left:6px}
.chk{display:flex;align-items:center;height:13px;white-space:nowrap}
.box{width:13px;height:13px;box-sizing:border-box;border:1px solid #333;margin-right:2px;background:#fff;display:flex;flex:none}
.box svg{display:block}
.r3{margin-top:7px;height:23px}
.r4{margin-top:3px;height:23px}
.ttl{margin-top:6px;height:14px;font:bold 12.500px "Liberation Sans";letter-spacing:0}
.t1{width:156px;text-align:right}
.t2{margin-left:103px}
.r6{margin-top:2px;height:21px}
.tp{position:relative;padding-left:9px}
.tp em{position:absolute;left:72px;top:13px;font-style:normal}
.r7{margin-top:4px;height:23px}
.res{flex:none;height:218px;display:flex;flex-direction:column;background:#f0f0f0}
.rt{margin:3px 0 5px 0;height:14px;padding-left:107px;font:bold 12.500px/14px "Liberation Sans";letter-spacing:0}
.rr{display:flex;height:23px;margin-bottom:3px;align-items:center;white-space:nowrap}
.rl{width:92px;text-align:right;flex:none;box-sizing:border-box}
.rb1{width:95px;height:23px;margin-left:6px;box-sizing:border-box;border:1px solid #444;padding:1px 5px;flex:none}
.wide{width:245px}
.xw{width:350px;border:1.500px solid #111;padding:0 3px;font-size:12.600px;letter-spacing:.02px}
.ru{margin-left:2px;font-size:12px}
.bold{font:bold 11.500px/14px Roboto,"Liberation Sans",sans-serif}
.bt-t{flex:1;background:#fff;border-top:1px solid #555;border-right:1.500px solid #555;display:grid;grid-template-columns:62px 60px 60px 90px 90px;line-height:26px;box-sizing:border-box}
.bt-t span{padding-left:5px;border-right:1px solid #e4e4e4;white-space:nowrap}
.status{height:22px;flex:none;box-sizing:border-box;border-top:1px solid #a0a0a0;border-bottom:1px solid #222;background:#f0f0f0;display:flex;line-height:20px;font-size:12px;letter-spacing:0}
.status span{box-sizing:border-box;padding-left:5px;border-right:1px solid #c0c0c0;flex:none;height:20px;white-space:nowrap}
.status .st0{width:1234px;border:0;padding-left:2px}
.status .st1{width:186px;border-right:0}
.status .st2{width:47px;padding-left:0}
.st3{width:66px}
.st4{width:53px}.st5{width:89px}.st6{width:34px}.st7{width:22px}.st8{width:37px}

.dlg{position:absolute;left:884px;top:251px;width:398px;height:441px;box-sizing:border-box;border:1.500px solid #2f7fc8;background:#f0f0f0;box-shadow:0 1px 9px rgba(0,0,0,.28);letter-spacing:-.3px}
.dt{height:30px;background:#fff;display:flex;align-items:center}
.dtt{margin-left:29px;font-size:12px;font-weight:500;letter-spacing:-.1px}
.dq{margin-left:auto;font-size:13px;margin-right:38px}
.dt svg{margin-right:19px}
.db{padding-left:3.500px}
.dtop{display:flex;height:46px;padding-top:7px;box-sizing:content-box}
.tlab{width:79px;flex:none;line-height:13px;padding-top:10px}
.rng{width:150px;height:20px;margin-top:11px;padding-left:3px}
.tm{margin-left:10px;display:flex;flex-direction:column;gap:2px}
.tmr{display:flex;align-items:center}
.tml{width:44px}
.tmr .spin{width:69px;height:22px;color:#222}
.tmu{margin-left:6px}
.fv{height:13px;line-height:13px}
.ftb{display:flex;margin-top:5px;margin-left:1px}
.ft{width:352px;height:130px;box-sizing:border-box;border:1.500px solid #666;background:#fff}
.fh,.fr{display:grid;grid-template-columns:51px 222px 49px 1fr;box-sizing:border-box}
.fh{height:25px;line-height:24px;text-align:center}
.fh span{border-right:1px solid #eee}
.fh span:last-child{border:0}
.fr{height:19px;border-bottom:1px solid #eee;padding-bottom:1px;line-height:20px}
.fh .fp{text-align:left;padding-left:7px}
.fr .fp{padding-left:7px}
.fn{text-align:right;padding-right:7px}
.sw{display:block;height:18px}
.fbs{margin-left:4px;display:flex;flex-direction:column;gap:4px}
.fb{width:28px;height:21px;box-sizing:border-box;background:#e1e1e1;border:1px solid #adadad;display:flex;align-items:center;justify-content:center}
.fb.dis{background:#ddd}
.trn{display:flex;align-items:center;margin-top:7px;height:22px}
.tlb{width:79px}
.spin.white{width:55px;height:22px;border:1px solid #999}
.pc{margin-left:7px;width:36px}
.sld{width:200px;height:20px;display:flex;align-items:center}
.sth{width:10px;height:20px;background:#0078d7;display:block;flex:none}
.str{flex:1;height:3px;background:#c8c8c8;border-top:1px solid #555;display:block}
.dc{margin:14px 0 0 1px}
.sc{display:flex;justify-content:space-between;margin:7px 0 0 3px;width:379px;height:12px;line-height:12px;font-size:11px}
.sc span{width:40px;text-align:center}
.grad{display:block;margin:3px 0 0 24px}
.sc2{margin-top:7px}
.dbtn{display:flex;gap:18px;margin:20px 0 0 66px}
.btn{width:73px;height:20px;box-sizing:border-box;background:#e1e1e1;border:1px solid #adadad;text-align:center;line-height:18px}
.def{border:2px solid #0c66b5;line-height:16px}
</style>
